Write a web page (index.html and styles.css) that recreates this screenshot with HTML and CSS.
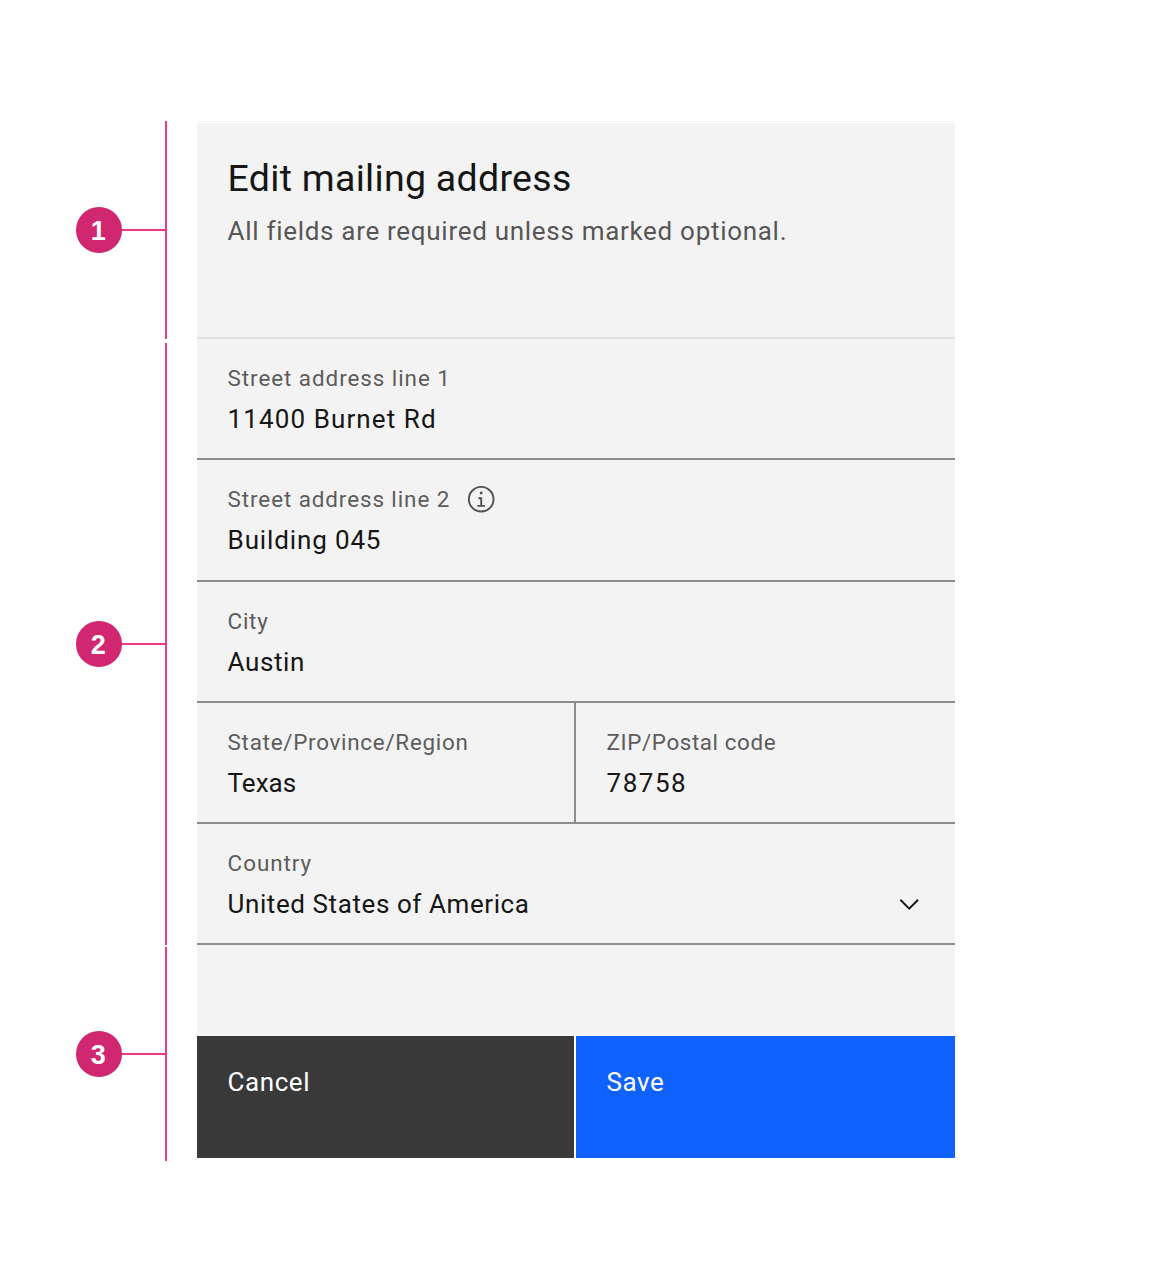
FILE: index.html
```
<!DOCTYPE html>
<html lang="en">
<head>
<meta charset="utf-8">
<title>Edit mailing address</title>
<link rel="stylesheet" href="styles.css">
</head>
<body>
<main class="page">
  <aside class="notes">
    <div class="note note-header"><span class="badge">1</span><span class="lead"></span></div>
    <div class="note note-body"><span class="badge">2</span><span class="lead"></span></div>
    <div class="note note-footer"><span class="badge">3</span><span class="lead"></span></div>
  </aside>
  <form class="card">
    <header class="intro">
      <h1 class="title">Edit mailing address</h1>
      <p class="hint">All fields are required unless marked optional.</p>
    </header>
    <div class="field">
      <div class="label label-street">Street address line 1</div>
      <div class="value value-street">11400 Burnet Rd</div>
    </div>
    <div class="field">
      <div class="label label-unit">Street address line 2
        <svg class="info" viewBox="0 0 32 32" aria-hidden="true"><path d="M17 22V14H13V16H15V22H12V24H20V22ZM16 8a1.5 1.5 0 1 0 1.5 1.5A1.5 1.5 0 0 0 16 8Z"/><path d="M16 30A14 14 0 1 1 30 16 14 14 0 0 1 16 30ZM16 4A12 12 0 1 0 28 16 12 12 0 0 0 16 4Z"/></svg>
      </div>
      <div class="value value-unit">Building 045</div>
    </div>
    <div class="field">
      <div class="label">City</div>
      <div class="value">Austin</div>
    </div>
    <div class="pair">
      <div class="field field-state">
        <div class="label">State/Province/Region</div>
        <div class="value value-state">Texas</div>
      </div>
      <div class="field">
        <div class="label label-zip">ZIP/Postal code</div>
        <div class="value value-zip">78758</div>
      </div>
    </div>
    <div class="field">
      <div class="label label-country">Country</div>
      <div class="value value-select">United States of America
        <svg class="chevron" viewBox="0 0 16 16" aria-hidden="true"><path d="M8 11 3 6l.7-.7L8 9.6l4.3-4.3.7.7z"/></svg>
      </div>
    </div>
    <footer class="actions">
      <button type="button" class="button cancel">Cancel</button>
      <button type="button" class="button save">Save</button>
    </footer>
  </form>
</main>
</body>
</html>
```
FILE: styles.css
```
* { box-sizing: border-box; }

body {
  margin: 0;
  background: #fff;
  color: #161616;
  font-family: Roboto, "Liberation Sans", sans-serif;
}

.page {
  display: flex;
  align-items: flex-start;
  gap: 30px;
  padding: 121px 0 0 76px;
}

/* Numbered brackets beside the card */
.notes {
  display: flex;
  flex-direction: column;
  width: 91px;
}

.note {
  display: flex;
  align-items: center;
  border-right: 2px solid #ee3a84;
}

.note-header { height: 218px; margin-bottom: 4px; }
.note-body { height: 602px; margin-bottom: 2px; }
.note-footer { height: 214px; }

.badge {
  display: flex;
  align-items: center;
  justify-content: center;
  width: 45.5px;
  height: 45.5px;
  padding: 2px 1px 0 0;
  border-radius: 50%;
  background: #d12771;
  color: #fff;
  font: bold 27px/30px "Liberation Sans", sans-serif;
}

.lead {
  flex: 1;
  height: 2px;
  background: #ee3a84;
}

/* Form card */
.card {
  display: flex;
  flex-direction: column;
  width: 758px;
  background: #f3f3f3;
  border-top: 1px solid #f5f5f5;
}

.intro {
  height: 217px;
  padding: 30.5px 30.6px 0;
  border-top: 1px solid #fff;
  border-bottom: 2px solid #e0e0e0;
}

.title {
  margin: 0 0 11.5px;
  font-size: 37.5px;
  line-height: 48px;
  font-weight: 400;
  letter-spacing: 0.29px;
}

.hint {
  margin: 0;
  color: #565656;
  font-size: 26px;
  line-height: 36px;
  letter-spacing: 0.7px;
}

.field {
  height: 121.3px;
  padding: 24px 30.6px 0;
  border-bottom: 2px solid #8d8d8d;
}

.label {
  display: flex;
  align-items: center;
  margin-bottom: 8px;
  color: #5c5c5c;
  font-size: 22.4px;
  line-height: 30px;
  height: 30px;
  letter-spacing: 0.73px;
}

.label-street { letter-spacing: 0.95px; }
.label-unit { letter-spacing: 0.92px; }
.label-zip { letter-spacing: 0.59px; }
.label-country { letter-spacing: 0.97px; }

.value {
  font-size: 26px;
  line-height: 36px;
  letter-spacing: 0.58px;
}

.value-street { letter-spacing: 1.1px; }
.value-unit { letter-spacing: 0.86px; }
.value-state { letter-spacing: 0; }
.value-zip { letter-spacing: 1.51px; }

.value-select {
  display: flex;
  align-items: center;
  justify-content: space-between;
}

.info {
  width: 30.4px;
  height: 30.4px;
  margin-left: 16px;
  fill: #525252;
}

.chevron {
  width: 30.4px;
  height: 30.4px;
  fill: #161616;
}

.pair {
  display: grid;
  grid-template-columns: 379px 379px;
}

.field-state { border-right: 2px solid #8d8d8d; }

.actions {
  display: grid;
  grid-template-columns: 377.4px 379px;
  gap: 1.6px;
  margin-top: 90.8px;
  background: #fff;
}

.button {
  height: 121.6px;
  padding: 28px 30.6px 0;
  border: 0;
  color: #fff;
  font: 26px/36px Roboto, "Liberation Sans", sans-serif;
  letter-spacing: 0.55px;
  text-align: left;
  display: flex;
  align-items: flex-start;
}

.cancel { background: #393939; }
.save { background: #0f62fe; }
```
